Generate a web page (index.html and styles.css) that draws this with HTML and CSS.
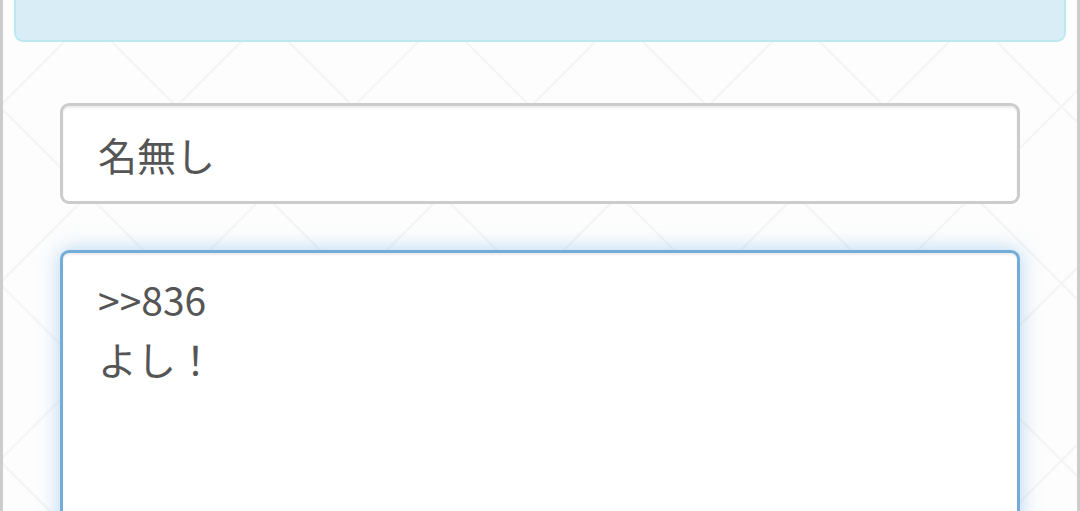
FILE: index.html
```html
<!DOCTYPE html>
<html lang="ja">
<head>
<meta charset="utf-8">
<title>書き込み</title>
<link rel="stylesheet" href="styles.css">
</head>
<body>
<div class="page">
  <div class="notice"></div>
  <form class="post-form">
    <input class="field name-field" type="text" value="名無し">
    <textarea class="field body-field">&gt;&gt;836
よし！</textarea>
  </form>
</div>
</body>
</html>
```

FILE: styles.css
```css
html, body {
  margin: 0;
  padding: 0;
  height: 100%;
  overflow: hidden;
}

body {
  background-color: #fdfdfd;
  background-image:
    linear-gradient(45deg, transparent calc(50% - 1.5px), #f5f5f5 calc(50% - 1px), #f5f5f5 calc(50% + 1px), transparent calc(50% + 1.5px)),
    linear-gradient(-45deg, transparent calc(50% - 1.5px), #f5f5f5 calc(50% - 1px), #f5f5f5 calc(50% + 1px), transparent calc(50% + 1.5px));
  background-size: 177px 177px;
  background-position: 88px 18px;
  font-family: "Noto Sans CJK JP", "Noto Sans", sans-serif;
  color: #555;
}

.page {
  box-sizing: border-box;
  min-height: 100%;
  border-left: 3px solid #cccccc;
  border-right: 3px solid #cccccc;
  display: flex;
  flex-direction: column;
}

.notice {
  margin: 0 11px;
  height: 40px;
  background: #d9edf7;
  border: 2px solid #bce8f1;
  border-top: none;
  border-radius: 0 0 9px 9px;
}

.post-form {
  display: flex;
  flex-direction: column;
  padding: 61px 57px 0;
  gap: 46px;
}

.field {
  box-sizing: border-box;
  display: block;
  width: 100%;
  margin: 0;
  font-family: "Noto Sans CJK JP", "Noto Sans", sans-serif;
  font-size: 39px;
  line-height: 1.5;
  color: #555;
  background: #fff;
  border: 3px solid #cccccc;
  border-radius: 9px;
  box-shadow: inset 0 2px 2px rgba(0, 0, 0, 0.075);
  outline: none;
  padding: 0 35px;
}

.name-field {
  height: 101px;
}

.body-field {
  height: 330px;
  padding-top: 17px;
  resize: none;
  overflow: hidden;
  border-color: #74acd8;
  box-shadow: inset 0 2px 2px rgba(0, 0, 0, 0.075), 0 0 20px rgba(102, 175, 233, 0.5);
}
```
